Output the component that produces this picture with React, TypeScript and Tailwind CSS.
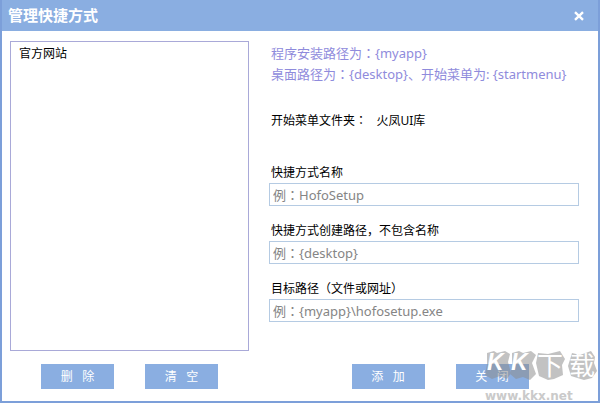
import type { ButtonHTMLAttributes } from "react";

const SHORTCUTS = ["官方网站"];

const FIELDS = [
  { id: "name", label: "快捷方式名称", placeholder: "例：HofoSetup" },
  { id: "path", label: "快捷方式创建路径，不包含名称", placeholder: "例：{desktop}" },
  { id: "target", label: "目标路径（文件或网址）", placeholder: "例：{myapp}\\hofosetup.exe" },
];

export default function App() {
  return (
    <div className="relative flex min-h-screen flex-col border-2 border-t-0 border-[#7c9fd9] bg-white font-['Noto_Sans','Noto_Sans_CJK_SC',sans-serif] text-[12px] text-black">
      <header className="flex h-[31px] items-center justify-between bg-[#8aaee1] pr-[9px] pl-1.5 text-white">
        <h1 className="font-['Noto_Sans_CJK_SC',sans-serif] text-[15px] font-bold">管理快捷方式</h1>
        <button type="button" aria-label="关闭窗口" className="flex size-5 items-center justify-center">
          <svg viewBox="0 0 10 10" className="size-2.5" stroke="currentColor" strokeWidth={2.4}>
            <path d="M1 1.2 L9 8.8 M9 1.2 L1 8.8" />
          </svg>
        </button>
      </header>

      <main className="grid flex-1 grid-cols-[239fr_321fr] gap-5 px-2 pt-2.5 pb-3">
        <section className="flex flex-col gap-[13px]">
          <ul className="flex-1 border border-[#a9a9d8] px-2 py-0.5">
            {SHORTCUTS.map((name) => (
              <li key={name} className="leading-5">
                {name}
              </li>
            ))}
          </ul>
          <div className="flex justify-center gap-[31px]">
            <ActionButton>删{"   "}除</ActionButton>
            <ActionButton>清{"   "}空</ActionButton>
          </div>
        </section>

        <section className="flex flex-col justify-between pr-[11px]">
          <div className="font-['Noto_Sans','Noto_Sans_CJK_JP',sans-serif]">
            <div className="px-0.5 pt-0.5 text-[13px] leading-[21px] whitespace-nowrap text-[#8f8bdc]">
              <p>程序安装路径为：{"{myapp}"}</p>
              <p>桌面路径为：{"{desktop}"}、开始菜单为: {"{startmenu}"}</p>
            </div>
            <p className="mt-6 px-0.5 leading-6 whitespace-pre">开始菜单文件夹：{"   "}火凤UI库</p>
            <form className="mt-[30px] flex flex-col gap-[15px]">
              {FIELDS.map((f) => (
                <div key={f.id} className="flex flex-col">
                  <label
                    htmlFor={f.id}
                    className="px-0.5 font-['Noto_Sans','Noto_Sans_CJK_SC',sans-serif] leading-5"
                  >
                    {f.label}
                  </label>
                  <input
                    id={f.id}
                    type="text"
                    placeholder={f.placeholder}
                    className="h-[23px] w-full border border-[#b5cbe3] px-[3px] text-[13px] placeholder:text-[#858585]"
                  />
                </div>
              ))}
            </form>
          </div>
          <div className="flex justify-center gap-[31px] pl-8">
            <ActionButton>添{"   "}加</ActionButton>
            <ActionButton>关{"   "}闭</ActionButton>
          </div>
        </section>
      </main>

      <Watermark />
    </div>
  );
}

function ActionButton(props: ButtonHTMLAttributes<HTMLButtonElement>) {
  return (
    <button
      type="button"
      className="h-[25px] w-[73px] bg-[#8aaee1] whitespace-pre text-white"
      {...props}
    />
  );
}

function Watermark() {
  return (
    <svg
      viewBox="0 -16 116 70"
      className="pointer-events-none absolute right-0 -bottom-0.5 h-[70px] w-[116px]"
    >
      <g fill="#8c8c8c" opacity={0.52}>
        <path d="M5 4 L12 2 L15 4 L23 2 L28 5 L26 13 L29 24 L25 30 L18 27 L10 30 L3 26 L5 15 Z" />
        <path d="M30 4 L37 2 L41 4 L49 2 L54 6 L50 14 L54 25 L48 31 L41 28 L34 30 L28 25 L30 15 Z" />
        <path d="M56 4 L66 5 L78 2 L83 10 L80 16 L81 26 L72 30 L66 31 L57 27 L54 14 Z" />
        <path d="M90 4 L98 6 L109 2 L113 8 L112 14 L115 22 L110 29 L102 31 L89 27 L86 17 Z" />
      </g>
      <g fill="#fff" fontSize={23} className="font-['Liberation_Sans',sans-serif] font-bold italic">
        <text x={5} y={21}>K</text>
        <text x={29} y={21}>K</text>
      </g>
      <g fill="#fff" fontSize={26} className="font-['Noto_Sans_CJK_SC',sans-serif]">
        <text x={55} y={26}>下</text>
        <text x={87} y={26}>载</text>
      </g>
      <text x={3} y={51} fontSize={12} fill="#cacaca" className="font-['DejaVu_Sans',sans-serif] font-bold">
        www.kkx.net
      </text>
    </svg>
  );
}
